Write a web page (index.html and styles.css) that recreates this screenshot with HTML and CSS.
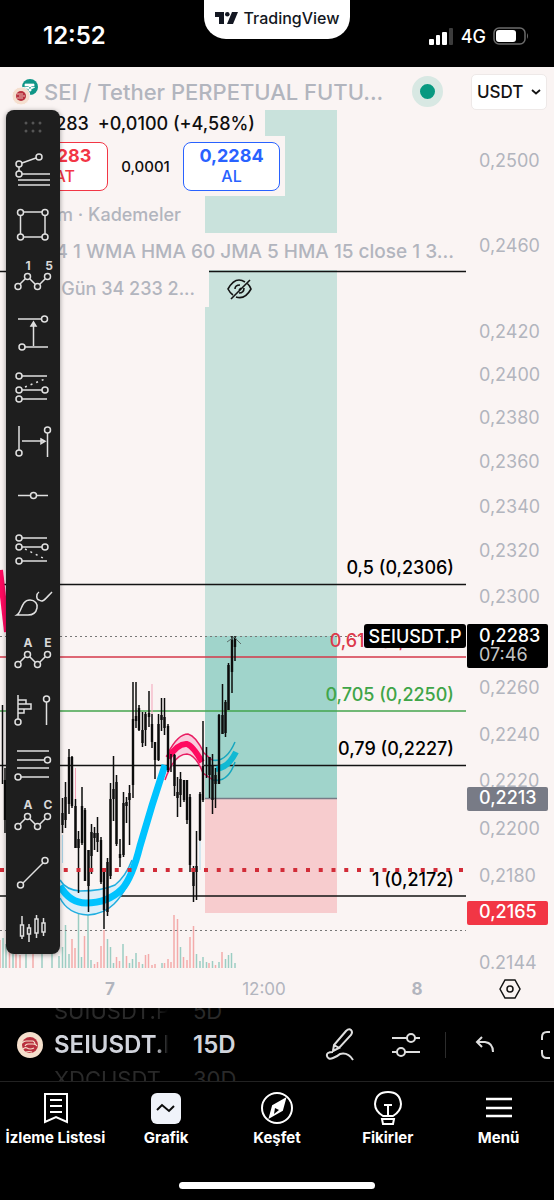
FILE: index.html
```html
<!DOCTYPE html>
<html lang="tr">
<head>
<meta charset="utf-8">
<meta name="viewport" content="width=device-width, initial-scale=1">
<title>SEIUSDT.P – TradingView</title>
<link rel="stylesheet" href="styles.css">
</head>
<body>
<div class="app">
  <header class="status">
    <time class="clock">12:52</time>
    <div class="brand">
      <svg width="24" height="14" viewBox="0 0 24 14" fill="#131722"><path d="M0 1h9v12H4V6H0z"/><circle cx="12.300" cy="3.300" r="2.300"/><path d="M17 1h6l-5 12h-6z"/></svg>
      <span>TradingView</span>
    </div>
    <div class="signal">
      <svg width="25" height="18" viewBox="0 0 25 18" fill="#fff"><rect x="0" y="12" width="5" height="6" rx="1"/><rect x="7" y="8" width="4" height="10" rx="1"/><rect x="13" y="5" width="5" height="13" rx="1"/><rect x="20" y="1" width="4" height="17" rx="1" fill="#3c3c3c"/></svg>
      <span>4G</span>
      <svg width="36" height="18" viewBox="0 0 36 18"><rect x="1" y="1" width="31" height="16" rx="5" fill="none" stroke="#6b6b6b" stroke-width="1.500"/><rect x="3" y="3" width="20" height="12" rx="3" fill="#fff"/><path d="M34 6q2 3 0 6z" fill="#6b6b6b"/></svg>
    </div>
  </header>

  <main class="chart">
    <svg class="plot" viewBox="0 67 466 941" preserveAspectRatio="xMaxYMin slice" role="img" aria-label="SEIUSDT.P grafiği">
      <rect x="205" y="110" width="132" height="526" fill="#c9e2dc"/>
      <rect x="205" y="636" width="132" height="163" fill="#a0d4cb"/>
      <rect x="205" y="799" width="132" height="114" fill="#f7ccce"/>
      <path d="M205 798.500H337" stroke="#777b86" stroke-width="1.500"/>

      <path class="vol-up" d="M3 968V938M6 968V944M13 968V930M26 968V940M42 968V936M52 968V948M59 968V956M62.500 968V947M65.500 968V925M69 968V954M78.500 968V910M81.500 968V957M88 968V904M91 968V960M107.500 968V939M110.500 968V947M113.500 968V963M123 968V944M129.500 968V963M132.500 968V959M136 968V953M142.500 968V964M162 968V963M180.500 968V947M196.500 968V954M200 968V961M203 968V957M206.500 968V962M212.500 968V961M219 968V962M225.500 968V959M228.500 968V955M231.500 968V953M235 968V963"/>
      <path class="vol-down" d="M0 968V940M9.500 968V948M16 968V950M20 968V955M33 968V950M72 968V939M75 968V948M84.500 968V936M94.500 968V964M97.500 968V962M101 968V946M104 968V930M116.500 968V957M119.500 968V961M126.500 968V956M139 968V962M145.500 968V955M148.500 968V954M152 968V965M155 968V964M164.500 968V963M168 968V959M171 968V962M174 968V915M177.500 968V919M183.500 968V957M187 968V960M190 968V937M193.500 968V926M209 968V963M215.500 968V965M222 968V952"/>

      <path d="M0 271.500H466M0 584.500H466M0 765.500H466M0 896H466" stroke="#131313" stroke-width="1.500"/>
      <path d="M0 657H466" stroke="#d4394a" stroke-width="1.500"/>
      <path d="M0 711H466" stroke="#43a54c" stroke-width="1.500"/>
      <path d="M0 636.500H466M0 930.500H466" stroke="#777" stroke-dasharray="2 3"/>

      <path d="M60 880Q66 890 80 891Q102 891 115 885Q126 876 132 860L138 862Q126 893 114 904Q104 914 88 915Q68 914 60 898Z" fill="#dceef8"/>
      <path d="M60 880Q66 890 80 891Q102 891 115 885Q126 876 132 860M60 898Q68 914 88 915Q104 914 114 904Q128 890 138 860" fill="none" stroke="#20aee0" stroke-width="1.500"/>
      <path d="M60 886Q70 903 86 903Q108 903 122 889Q132 878 140 846Q152 804 165 765" fill="none" stroke="#00c3ff" stroke-width="7"/>
      <path d="M168 753Q178 734 188 734Q196 736 204 753V775Q196 754 187 754Q176 756 168 774Z" fill="#f9cddd"/>
      <path d="M168 753Q178 734 188 734Q196 736 204 753L212 760M165 780Q174 754 187 754Q196 755 203 773L213 780" fill="none" stroke="#e91e63" stroke-width="1.500"/>
      <path d="M168 758Q178 743 187 744Q193 746 202 762" fill="none" stroke="#ff0a60" stroke-width="6"/>
      <path d="M216 769Q228 768 236 752" fill="none" stroke="#12b9d3" stroke-width="6"/>
      <path d="M212 760Q226 763 235 742M213 780Q228 783 235 762" fill="none" stroke="#17a7bf" stroke-width="1.500"/>
      <path d="M0 570L7 632" stroke="#ff0a60" stroke-width="6"/>
      <path d="M75.500 768V799M152 684V714" stroke="#f3a3b9"/>
      <path d="M62.500 835V863M200 841V870" stroke="#aed7ea"/>

      <path class="wick" d="M2.500 705V784M5 768V833M62.500 798V833M65.500 782V828M69 749V814M72 756V808M75.500 799V848M78.500 831V893M82 787V845M85 808V881M88.500 850V912M91.500 824V874M94.500 827V850M97.500 817V852M101 837V884M104 870V929M107.500 858V916M110.500 783V879M113.500 756V821M116.500 775V846M120 839V867M123.500 792V857M126.500 797V823M129.500 785V845M133 682V798M136 682V728M139 705V731M142.500 712V747M145.500 712V746M149 691V727M152 714V748M155 742V779M158.500 714V761M161.500 698V731M164.500 698V735M168 724V772M171 754V772M174.500 754V796M177.500 777V817M180.500 772V807M184 780V802M187 780V824M190 794V872M193.500 866V902M196.500 831V900M200 792V841M203 721V802M206.500 747V778M209.500 757V798M212.500 754V814M215.500 768V808M219 714V784M222.500 684V734M225.500 700V737M228.500 663V710M232 636V693M235 636V661"/>
      <path class="body" d="M5 780V820M62.500 813V825M65.500 797V820M69 757V804M72 757V806M75.500 806V848M78.500 839V848M82 806V843M85 810V881M88.500 850V886M91.500 832V856M94.500 833V838M97.500 833V842M101 840V882M104 872V910M107.500 862V912M110.500 799V876M113.500 789V799M116.500 782V844M120 854V858M123.500 803V855M126.500 802V806M129.500 793V800M133 719V785M136 716V721M139 708V730M142.500 730V743M145.500 714V730M149 713V717M152 724V742M155 742V760M158.500 724V760M161.500 715V720M164.500 717V728M168 726V770M174.500 755V786M177.500 792V798M180.500 779V795M184 780V800M187 780V820M190 797V865M193.500 872V886M196.500 866V872M200 794V840M203 766V800M209.500 757V775M212.500 766V800M215.500 775V784M219 715V784M222.500 715V734M225.500 702V733M228.500 665V710M232 640V672M235 638V647"/>
      <path d="M227 642l7-5 7 7" fill="none" stroke="#5c6d6a"/>
      <path d="M0 870H466" stroke="#d22c38" stroke-width="4" stroke-dasharray="4 8.750"/>

      <g class="level" text-anchor="end">
        <text x="454" y="574">0,5 (0,2306)</text>
        <text x="454" y="647" fill="#dc3a4b">0,618 (0,2273)</text>
        <text x="454" y="701" fill="#3fa548">0,705 (0,2250)</text>
        <text x="454" y="755">0,79 (0,2227)</text>
        <text x="454" y="886">1 (0,2172)</text>
      </g>
      <rect x="364" y="624" width="102" height="24" rx="3"/>
      <text class="tag" x="415" y="643" text-anchor="middle">SEIUSDT.P</text>
    </svg>

    <svg class="prices" viewBox="0 67 88 941" preserveAspectRatio="xMinYMin slice" role="img" aria-label="Fiyat ölçeği">
      <g class="price">
        <text x="13" y="167">0,2500</text><text x="13" y="252">0,2460</text><text x="13" y="338">0,2420</text><text x="13" y="381">0,2400</text><text x="13" y="424">0,2380</text><text x="13" y="468">0,2360</text><text x="13" y="513">0,2340</text><text x="13" y="557">0,2320</text><text x="13" y="603">0,2300</text><text x="13" y="694">0,2260</text><text x="13" y="741">0,2240</text><text x="13" y="787">0,2220</text><text x="13" y="835">0,2200</text><text x="13" y="882">0,2180</text><text x="13" y="969">0.2144</text>
      </g>
      <rect x="1" y="624" width="81" height="44" rx="2"/>
      <rect x="1" y="787" width="81" height="24" rx="2" fill="#787b86"/>
      <rect x="1" y="901" width="81" height="24" rx="2" fill="#f23645"/>
      <text class="tag" x="13" y="642">0,2283</text>
      <text class="tag countdown" x="13" y="661">07:46</text>
      <text class="tag" x="13" y="804">0,2213</text>
      <text class="tag" x="13" y="918">0,2165</text>
      <rect x="0" y="970" width="88" height="38" fill="#faf4f3"/>
      <path d="M34 989l5-9h10l5 9-5 9H39z" fill="none" stroke="#131313" stroke-width="1.500"/><circle cx="44" cy="989" r="3" fill="none" stroke="#131313" stroke-width="1.500"/>
    </svg>

    <div class="times"><b>7</b><span>12:00</span><b>8</b></div>

    <section class="legend">
      <div class="title">
        <svg width="26" height="28" viewBox="0 0 26 28"><circle cx="18" cy="9" r="8" fill="#109688"/><path d="M13 6h9v2h-3v5h-2V8h-4zM12 9q6 4 11 0" fill="#fff" stroke="#fff" stroke-width=".7"/><circle cx="9" cy="18" r="9" fill="#f5dfcf" stroke="#faf4f3"/><circle cx="9" cy="18" r="5" fill="#b8303e"/><path d="M5 16h6M7 18h6M5 20h6" fill="none" stroke="#f5dfcf" stroke-width=".8"/></svg>
        <h1>SEI / Tether PERPETUAL FUTU...</h1>
        <i class="live"></i>
        <button class="currency">USDT <svg width="10" height="6" viewBox="0 0 10 6" fill="none" stroke="#131313" stroke-width="1.800"><path d="M1 1l4 3.500L9 1"/></svg></button>
      </div>
      <p class="change">0,2283 <span>+0,0100 (+4,58%)</span></p>
      <div class="quotes">
        <button class="quote sell"><b>0,2283</b>SAT</button>
        <span class="spread">0,0001</span>
        <button class="quote buy"><b>0,2284</b>AL</button>
      </div>
      <p class="study levels">Hacim · Kademeler</p>
      <p class="study averages">34 1 WMA HMA 60 JMA 5 HMA 15 close 1 3...</p>
      <div class="hidden-study"><p class="study days">Gün 34 233 2...</p>
        <button class="plain" aria-label="Göster"><svg width="28" height="24" viewBox="0 0 28 24" fill="none" stroke="#131313" stroke-width="1.600"><path d="M19 5Q16 3 13 3 7 3 2 12q2 4 5 6M10 20q9 3 15-8-1-3-4-6M9 12q0-4 5-4M18 11q0 5-5 5M5 22L24 3M13 13l2-2"/></svg></button>
      </div>
    </section>

    <nav class="tools" aria-label="Çizim araçları">
      <svg class="grip" width="54" height="34" fill="#555"><circle cx="20" cy="13" r="1.500"/><circle cx="27" cy="13" r="1.500"/><circle cx="34" cy="13" r="1.500"/><circle cx="20" cy="21" r="1.500"/><circle cx="27" cy="21" r="1.500"/><circle cx="34" cy="21" r="1.500"/></svg>
      <button aria-label="Çatal"><svg viewBox="0 0 54 54"><path d="M13 23v4M16 19l14-5M16 30h28M12 36h32M12 41h32"/><circle cx="13" cy="30" r="3"/><circle cx="13" cy="20" r="3"/><circle cx="33" cy="13" r="3"/></svg></button>
      <button aria-label="Dikdörtgen"><svg viewBox="0 0 54 54"><path d="M18 14h18M18 39h18M14.500 18v18M39 18v18"/><circle cx="14.500" cy="14.500" r="3"/><circle cx="39" cy="14.500" r="3"/><circle cx="14.500" cy="39" r="3"/><circle cx="39" cy="39" r="3"/></svg></button>
      <button aria-label="Elliott dalgası 1-5"><svg viewBox="0 0 54 54"><use href="#wave"/><text x="22" y="18">1</text><text x="43" y="18">5</text></svg></button>
      <button aria-label="Fiyat aralığı"><svg viewBox="0 0 54 54"><path d="M12 13h23M19 41h23M27.500 40V17M25 20l2.500-4 2.500 4z"/><circle cx="38.500" cy="13" r="3"/><circle cx="16" cy="41" r="3"/></svg></button>
      <button aria-label="Uzun pozisyon"><svg viewBox="0 0 54 54"><path d="M16 16h25M16 30h20M16 39h25"/><path d="M19 27l20-8" stroke-dasharray="2 4"/><circle cx="13" cy="16" r="3"/><circle cx="13" cy="30" r="3"/><circle cx="39" cy="30" r="3"/><circle cx="13" cy="39" r="3"/></svg></button>
      <button aria-label="Tarih aralığı"><svg viewBox="0 0 54 54"><path d="M13 12v24M41.500 19v24M16 27h23M35 25l4 2.300-4 2.300z"/><circle cx="13" cy="39" r="3"/><circle cx="41.500" cy="16" r="3"/></svg></button>
      <button aria-label="Yatay çizgi"><svg viewBox="0 0 54 54"><path d="M12 27.500h12M31 27.500h11"/><circle cx="27.500" cy="27.500" r="3"/></svg></button>
      <button aria-label="Kısa pozisyon"><svg viewBox="0 0 54 54"><path d="M16 16h25M16 25h20M16 39h25"/><path d="M19 27l20 10" stroke-dasharray="2 4"/><circle cx="13" cy="16" r="3"/><circle cx="13" cy="25" r="3"/><circle cx="39" cy="25" r="3"/><circle cx="13" cy="39" r="3"/></svg></button>
      <button aria-label="Fırça"><svg viewBox="0 0 54 54"><path d="M11 39C16 36 15 24 24 24c5 0 8 4 7 8-1 5-4 7-9 7zM33 16c-3 2-3 7 0 8 4 3 6-1 13-8"/></svg></button>
      <button aria-label="Formasyon ABCDE"><svg viewBox="0 0 54 54"><use href="#wave"/><text x="22" y="17">A</text><text x="42" y="17">E</text></svg></button>
      <button aria-label="Hacim profili"><svg viewBox="0 0 54 54"><path d="M12 11v24M12 16h8v4h-8M20 20h5v5H12M18 25v4h-6M40.500 18v23"/><circle cx="12" cy="38" r="3"/><circle cx="40.500" cy="15" r="3"/></svg></button>
      <button aria-label="Fib düzeltmesi"><svg viewBox="0 0 54 54"><path d="M11 13h32M11 22h27M11 30h32M15 39h28"/><circle cx="41.500" cy="22" r="3"/><circle cx="12" cy="39" r="3"/></svg></button>
      <button aria-label="Düzeltme dalgası ABC"><svg viewBox="0 0 54 54"><use href="#wave"/><text x="22" y="17">A</text><text x="42" y="17">C</text></svg></button>
      <button aria-label="Trend çizgisi"><svg viewBox="0 0 54 54"><path d="M17 37l20-20"/><circle cx="14.500" cy="39" r="3"/><circle cx="39" cy="14.500" r="3"/></svg></button>
      <button aria-label="Çubuk deseni"><svg viewBox="0 0 54 54"><path d="M16 16v9M16 36v3M14.500 25h3v11h-3zM23 24v4M23 34v8M21.500 28h3v6h-3zM30.500 15v4M30.500 33v5M29 19h3v14h-3zM37.500 18v5M37.500 32v4M36 23h3v9h-3z"/></svg></button>
    </nav>
  </main>

  <section class="toolbar">
    <svg width="26" height="26" viewBox="0 0 26 26"><circle cx="13" cy="13" r="13" fill="#f5dfcc"/><circle cx="13" cy="13" r="8" fill="#b8303e"/><path d="M5 11q2-2 4-2h7q2 1 2 3M8 14q1-2 3-2h5q3 0 4 2M6 17q2-2 4-1 3 2 7 0M9 20q3-1 6 0" fill="none" stroke="#f5dfcc" stroke-width="1.200"/></svg>
    <div class="wheel symbols"><span>SUIUSDT.P</span><b>SEIUSDT.P</b><span>XDCUSDT.P</span></div>
    <div class="wheel intervals"><span>5D</span><b>15D</b><span>30D</span></div>
    <div class="actions">
      <button class="plain" aria-label="Çiz"><svg width="30" height="34" viewBox="0 0 30 34"><path d="M8 23l1-6L21 3q3-3 5-1t0 5L14 20zM8 23l6-3-5-3M8 24q-7 0-6 4t6 2 7-4q8-2 13 6"/></svg></button>
      <button class="plain" aria-label="Ayarlar"><svg width="30" height="28" viewBox="0 0 30 28"><path d="M1 7h15M24 7h5M1 21h5M14 21h15"/><circle cx="20" cy="7" r="4"/><circle cx="10" cy="21" r="4"/></svg></button>
      <span class="divider"></span>
      <button class="plain undo" aria-label="Geri al"><svg width="20" height="18" viewBox="0 0 20 18"><path d="M7 1L2 6l5 5M2 6h8q8 1 8 10"/></svg></button>
      <button class="plain" aria-label="Tam ekran"><svg width="14" height="30" viewBox="0 0 14 30"><path d="M2 10V7q0-5 5-5h3M2 20v3q0 5 5 5h3"/></svg></button>
    </div>
  </section>

  <nav class="tabs">
    <a href="#watchlist"><svg viewBox="0 0 36 36"><path d="M8 4h22v28l-11-5-11 5zM13 10h12M13 16h12M13 22h12"/></svg>İzleme Listesi</a>
    <a href="#chart"><svg viewBox="0 0 36 36"><rect x="3" y="3" width="30" height="31" rx="6" fill="#f0f3fa" stroke="none"/><path d="M9 20l5-5 7 6 5-5" stroke="#0b0b0b"/></svg>Grafik</a>
    <a href="#explore"><svg viewBox="0 0 36 36"><circle cx="18" cy="18" r="15"/><path d="M26 9L14 16l-3 11 12-7z" fill="#fff"/><path d="M16 18l4 2-5 4z" fill="#000" stroke="none"/></svg>Keşfet</a>
    <a href="#ideas"><svg viewBox="0 0 36 36"><path d="M13 26q-8-5-8-12 1-12 13-12t13 12q0 7-8 12zM14 15h8M18 15v11M12 29h12l-1 5H13z"/></svg>Fikirler</a>
    <a href="#menu"><svg viewBox="0 0 36 36"><path d="M5 9h26M5 18h26M5 26h26" stroke-width="2.500"/></svg>Menü</a>
  </nav>
  <div class="home"></div>
</div>

<svg class="defs" aria-hidden="true"><g id="wave"><path d="M14 32l5-5M24 27l5 5M34 32l5-5"/><circle cx="12" cy="34.500" r="3"/><circle cx="21.500" cy="24.500" r="3"/><circle cx="31.500" cy="34.500" r="3"/><circle cx="41.500" cy="24.500" r="3"/></g></svg>
</body>
</html>
```

FILE: styles.css
```css
* { box-sizing: border-box; }
body { margin: 0; background: #000; font-family: Inter, "Liberation Sans", sans-serif; color: #0f0f0f; }
button { font: inherit; padding: 0; cursor: pointer; }
p, h1 { margin: 0; white-space: nowrap; }
svg { display: block; flex: none; }
.defs { position: absolute; width: 0; height: 0; }
.app { min-height: 100vh; display: flex; flex-direction: column; overflow: hidden; }
.plain { border: 0; background: none; }

.status { display: grid; grid-template-columns: 1fr 146px 1fr; height: 67px; color: #fff; }
.clock { padding: 21px 0 0 43px; font-size: 24px; line-height: 30px; font-weight: 600; }
.brand { display: flex; justify-content: center; gap: 5px; height: 39px; padding-top: 10px; background: #fff; color: #131722; border-radius: 0 0 22px 22px; font: 500 16px/16px Inter, sans-serif; }
.brand svg { margin-top: 1px; }
.signal { display: flex; align-items: center; justify-content: flex-end; gap: 7px; height: 30px; margin-top: 21px; padding-right: 25px; font-size: 18px; font-weight: 500; }

.chart { position: relative; display: grid; grid-template-columns: 1fr 88px; height: 941px; background: #faf4f3; overflow: hidden; }
.plot, .prices { width: 100%; height: 941px; }
.vol-up { stroke: #9ccdc3; stroke-width: 1.5; }
.vol-down { stroke: #f4abab; stroke-width: 1.5; }
.wick { stroke: #0c0c0c; stroke-width: 1.5; }
.body { stroke: #0c0c0c; stroke-width: 2.4; }
.level { font-size: 18px; font-weight: 500; }
.price { font-size: 18px; fill: #b2b5be; }
.tag { font-size: 18px; font-weight: 500; fill: #fff; }
.countdown { fill: #c4c4c4; font-weight: 400; }

.times { position: absolute; left: 0; right: 88px; bottom: 8px; display: grid; grid-template-columns: 220px 88px 1fr; text-align: center; font-size: 17px; line-height: 22px; color: #b2b5be; }
.times b:last-child { padding-left: 60px; }

.legend { position: absolute; inset: 0 0 auto 0; }
.legend > * { background: #faf4f3; }
.title { display: flex; align-items: center; height: 43px; padding: 6px 7px 0 12px; color: #b2b5be; }
.title h1 { flex: 1; margin-left: 6px; font-size: 22px; line-height: 30px; font-weight: 500; }
.live { width: 31px; height: 31px; margin-right: 28px; border: 8px solid #d8e8e3; border-radius: 50%; background: #089981; }
.currency { display: flex; align-items: center; justify-content: space-between; width: 76px; height: 36px; padding: 0 5px; border: 1px solid #eee9e8; border-radius: 5px; background: #fff; color: #131313; font-size: 17px; font-weight: 500; }
.change { width: 265px; height: 26px; text-align: right; padding-right: 10px; font-size: 18px; line-height: 27px; font-weight: 500; }
.change span { margin-left: 4px; }
.quotes { display: flex; align-items: center; justify-content: space-between; width: 285px; height: 60px; padding: 0 5px 0 11px; }
.quote { width: 97px; height: 49px; border: 1px solid; border-radius: 8px; background: #fff; font-size: 16px; line-height: 20px; font-weight: 500; }
.quote b { display: block; font-size: 18px; }
.sell { color: #f23645; }
.buy { color: #2962ff; }
.spread { font-size: 15px; font-weight: 500; }
.study { font-size: 18px; font-weight: 500; color: #b2b5be; }
.levels { width: 205px; height: 37px; padding-right: 24px; line-height: 38px; text-align: right; }
.averages { width: 458px; height: 37px; margin-left: 8px; padding-right: 12px; line-height: 38px; text-align: right; }
.legend .averages { font-size: 19px; }
.legend .hidden-study { display: flex; gap: 17px; background: none; }
.days { width: 201px; height: 37px; margin-left: 8px; padding-right: 14px; line-height: 38px; text-align: right; background: #faf4f3; }

.tools { position: absolute; left: 6px; top: 43px; display: flex; flex-direction: column; width: 54px; border-radius: 8px; background: #1e1e1e; box-shadow: 0 1px 5px #0006; }
.tools button { width: 54px; height: 54px; border: 0; background: none; }
.tools button svg, #wave { fill: none; stroke: #e0e0e0; stroke-width: 1.5; }
.tools text { fill: #d8d8d8; stroke: none; font-size: 12px; font-weight: 700; text-anchor: middle; }

.toolbar { display: flex; align-items: center; height: 74px; padding-left: 17px; overflow: hidden; border-bottom: 1px solid #222; color: #d1d4dc; }
.wheel { display: flex; flex-direction: column; font-size: 24px; line-height: 34px; }
.wheel b { font-weight: 600; }
.wheel span { color: #2a2a2a; font-size: 22px; }
.symbols { width: 114px; margin-left: 11px; overflow: hidden; -webkit-mask: linear-gradient(90deg, #000 90%, transparent); mask: linear-gradient(90deg, #000 90%, transparent); }
.intervals { margin-left: 25px; }
.actions { display: flex; align-items: center; flex: 1; justify-content: flex-end; gap: 36px; }
.actions svg { fill: none; stroke: #dedede; stroke-width: 2; }
.actions .undo { margin-right: 9px; }
.divider { width: 1px; height: 26px; margin: 0 -7px 0 -12px; background: #2c2c2c; }

.tabs { display: grid; grid-template-columns: repeat(5, 1fr); padding-top: 8px; }
.tabs a { display: flex; flex-direction: column; align-items: center; gap: 2px; color: #fff; text-decoration: none; white-space: nowrap; font-size: 15px; line-height: 20px; font-weight: 700; }
.tabs svg { width: 36px; height: 36px; fill: none; stroke: #fff; stroke-width: 2; }
.home { width: 196px; height: 7px; margin: auto auto 11px; border-radius: 4px; background: #fff; }
```
